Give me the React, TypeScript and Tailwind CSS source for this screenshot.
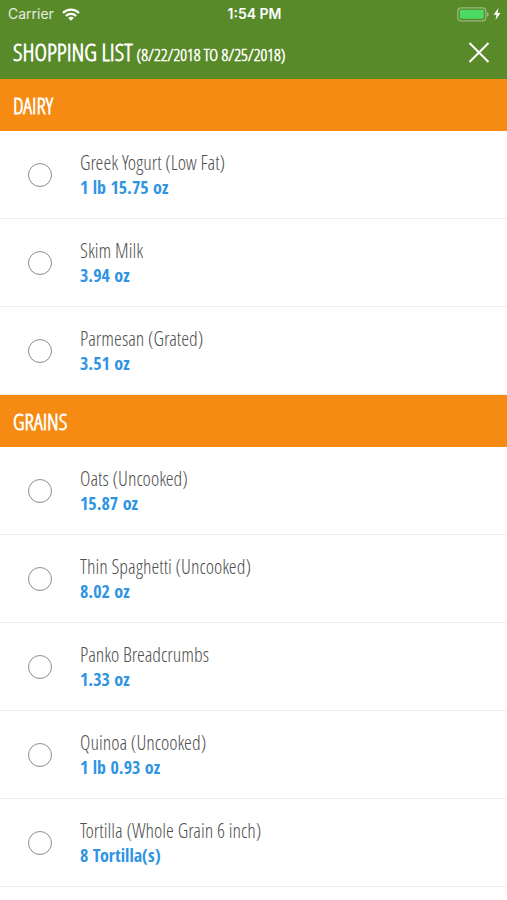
import React, { useState } from 'react';

interface Item {
  id: string;
  name: string;
  amount: string;
}

interface Section {
  title: string;
  items: Item[];
}

const sections: Section[] = [
  {
    title: 'Dairy',
    items: [
      { id: 'yogurt', name: 'Greek Yogurt (Low Fat)', amount: '1 lb 15.75 oz' },
      { id: 'milk', name: 'Skim Milk', amount: '3.94 oz' },
      { id: 'parmesan', name: 'Parmesan (Grated)', amount: '3.51 oz' },
    ],
  },
  {
    title: 'Grains',
    items: [
      { id: 'oats', name: 'Oats (Uncooked)', amount: '15.87 oz' },
      { id: 'spaghetti', name: 'Thin Spaghetti (Uncooked)', amount: '8.02 oz' },
      { id: 'panko', name: 'Panko Breadcrumbs', amount: '1.33 oz' },
      { id: 'quinoa', name: 'Quinoa (Uncooked)', amount: '1 lb 0.93 oz' },
      { id: 'tortilla', name: 'Tortilla (Whole Grain 6 inch)', amount: '8 Tortilla(s)' },
    ],
  },
];

const StatusBar = () => (
  <div className="grid h-7 grid-cols-3 items-center pr-1.5 pl-2 font-['Inter','Liberation_Sans',sans-serif] text-sm">
    <div className="flex items-center gap-2">
      <span className="text-white/85">Carrier</span>
      <svg viewBox="0 0 18 13" className="h-[13px] w-[18px]" fill="none" stroke="white" strokeWidth="2.3">
        <path d="M1 5a11.3 11.3 0 0 1 16 0" />
        <path d="M3.9 8a7.2 7.2 0 0 1 10.2 0" />
        <path d="M9 12.8 6.2 10a4 4 0 0 1 5.6 0Z" fill="white" stroke="none" />
      </svg>
    </div>
    <span className="text-center font-semibold">1:54 PM</span>
    <div className="flex items-center justify-end gap-1">
      <svg viewBox="0 0 32 15" className="h-[15px] w-8">
        <rect x="0.8" y="0.8" width="28" height="13" rx="3" fill="none" stroke="white" strokeOpacity="0.4" strokeWidth="1.3" />
        <rect x="2.8" y="2.8" width="24" height="9" rx="1" fill="#4cd964" />
        <path d="M30 5.2q1.8.6 1.8 2.3T30 9.8Z" fill="white" fillOpacity="0.4" />
      </svg>
      <svg viewBox="0 0 8 12" className="h-3 w-2" fill="white">
        <path d="M5.5 0 .5 6.8h3L2.5 12l5-7h-3Z" />
      </svg>
    </div>
  </div>
);

const ItemRow = ({ item, checked, onToggle }: { item: Item; checked: boolean; onToggle: () => void }) => (
  <li className="border-b border-[#ececec]">
    <label htmlFor={item.id} className="flex h-[87px] cursor-pointer items-center gap-7 px-7">
      <input
        id={item.id}
        type="checkbox"
        checked={checked}
        onChange={onToggle}
        className="size-6 shrink-0 appearance-none rounded-full border border-[#8c8c8c] checked:bg-[#2f95e3]"
      />
      <span className="flex flex-col">
        <span className="font-['Open_Sans_Condensed_Light','Roboto_Condensed',sans-serif] text-xl leading-[25px] text-[#505050]">
          {item.name}
        </span>
        <span className="text-lg leading-[25px] font-bold text-[#2f95e3]">{item.amount}</span>
      </span>
    </label>
  </li>
);

export default function App() {
  const [checked, setChecked] = useState<string[]>([]);

  const toggle = (id: string) =>
    setChecked(prev => (prev.includes(id) ? prev.filter(c => c !== id) : [...prev, id]));

  return (
    <div className="min-h-screen bg-white font-['Open_Sans_Condensed','Roboto_Condensed','Liberation_Sans',sans-serif]">
      <header className="bg-[#588a29] text-white">
        <StatusBar />
        <div className="flex h-[51px] items-center justify-between pr-4 pb-1 pl-[13px]">
          <h1 className="flex items-baseline gap-1 font-['Open_Sans_Condensed_Light','Roboto_Condensed',sans-serif] font-bold uppercase">
            <span className="text-2xl">Shopping List</span>
            <span className="text-[17px]">(8/22/2018 to 8/25/2018)</span>
          </h1>
          <button type="button" aria-label="Close" className="cursor-pointer">
            <svg viewBox="0 0 24 24" className="size-6" fill="none" stroke="white" strokeWidth="2">
              <path d="m2.5 3 19 19M21.5 3l-19 19" />
            </svg>
          </button>
        </div>
      </header>
      <main>
        {sections.map(section => (
          <section key={section.title}>
            <h2 className="flex h-[52px] items-center bg-[#f58b12] px-[13px] font-['Open_Sans_Condensed_Light','Roboto_Condensed',sans-serif] text-[22px] font-bold text-white uppercase">
              {section.title}
            </h2>
            <ul>
              {section.items.map(item => (
                <ItemRow
                  key={item.id}
                  item={item}
                  checked={checked.includes(item.id)}
                  onToggle={() => toggle(item.id)}
                />
              ))}
            </ul>
          </section>
        ))}
      </main>
    </div>
  );
}
